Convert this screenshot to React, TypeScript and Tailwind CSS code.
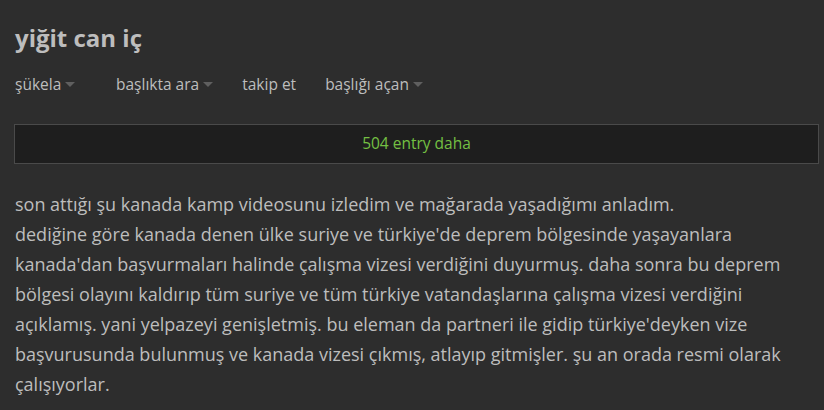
import React from 'react';

const navItems = [
  { label: 'şükela', caret: true, width: 'w-[72px]' },
  { label: 'başlıkta ara', caret: true, width: '' },
  { label: 'takip et', caret: false, width: '' },
  { label: 'başlığı açan', caret: true, width: '' },
];

function Caret() {
  return <span className="ml-[4px] inline-block h-0 w-0 border-x-[5px] border-t-[5px] border-x-transparent border-t-[#5f5f5f]" />;
}

export default function App() {
  return (
    <div className="min-h-[410px] bg-[#2d2d2d] px-[15px] pt-[22px] text-[#bdbdbd]" style={{ fontFamily: '"Open Sans", "Noto Sans", sans-serif' }}>
      <h1 className="text-[24px] font-bold leading-[32px] text-[#bdbdbd]">yiğit can iç</h1>

      {/* topic nav */}
      <div className="mt-[18px] flex items-center gap-[29px] text-[15.5px] leading-[24px]">
        {navItems.map((item) => (
          <div key={item.label} className={`flex items-center ${item.width}`}>
            <span>{item.label}</span>
            {item.caret && <Caret />}
          </div>
        ))}
      </div>

      <div className="mt-[28px] -ml-[1px] -mr-[10px] flex h-[40px] items-center justify-center border border-[#4a4a4a] bg-[#1e1e1e] text-[15.5px] text-[#74c043]">
        504 entry daha
      </div>

      <p className="mt-[25px] text-[18px] leading-[30px]">
        son attığı şu kanada kamp videosunu izledim ve mağarada yaşadığımı anladım.
        <br />
        dediğine göre kanada denen ülke suriye ve türkiye'de deprem bölgesinde yaşayanlara kanada'dan başvurmaları halinde çalışma vizesi verdiğini duyurmuş. daha sonra bu deprem bölgesi olayını kaldırıp tüm suriye ve tüm türkiye vatandaşlarına çalışma vizesi verdiğini açıklamış. yani yelpazeyi genişletmiş. bu eleman da partneri ile gidip türkiye'deyken vize başvurusunda bulunmuş ve kanada vizesi çıkmış, atlayıp gitmişler. şu an orada resmi olarak çalışıyorlar.
      </p>
    </div>
  );
}
